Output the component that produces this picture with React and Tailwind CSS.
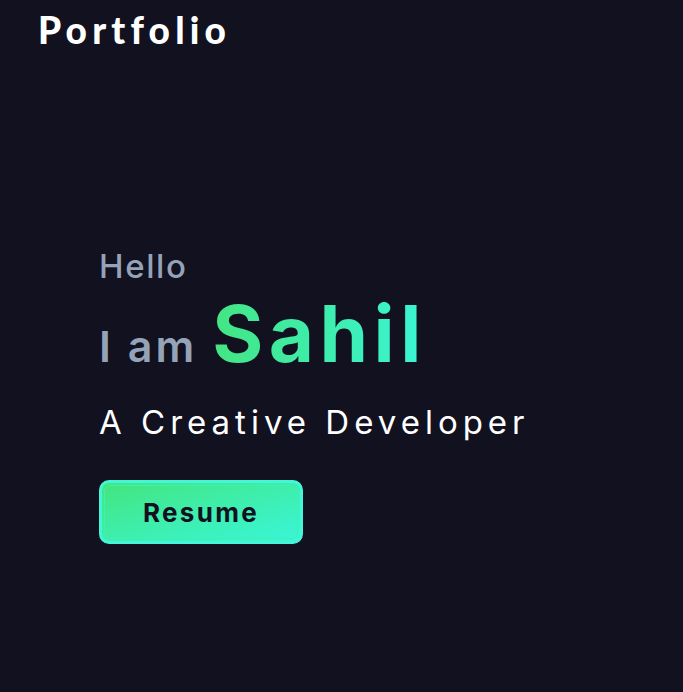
import React from "react";

const App = () => {
  return (
    <div className="min-h-screen w-full bg-[#12111f] font-['Inter',sans-serif] overflow-hidden">
      {/* Navbar */}
      <nav className="px-[38px] pt-[2px]">
        <h1 className="text-[37px] font-black text-white font-['Lato',sans-serif] tracking-[5.2px]">Portfolio</h1>
      </nav>

      {/* Hero */}
      <section className="pl-[99px] pt-[192px]">
        <p className="text-[33px] font-medium text-[#94a3b8] leading-none tracking-[1.6px]">Hello</p>
        <div className="flex items-baseline gap-[15px] mt-[-8px]">
          <span className="text-[43px] font-semibold text-[#94a3b8] tracking-[3px]">I am</span>
          <span className="text-[78px] font-bold tracking-[5.5px] bg-gradient-to-r from-[#44e582] to-[#3af5d4] bg-clip-text text-transparent">
            Sahil
          </span>
        </div>
        <h2 className="mt-[6px] text-[33px] text-white tracking-[5px] font-normal">A Creative Developer</h2>

        <button className="mt-[33px] w-[204px] h-[64px] rounded-[10px] border-[3px] border-[#45f5d8] p-[2px] bg-gradient-to-br from-[#43e57c] to-[#3af6d8] text-[#12111f] text-[26px] font-bold tracking-[2.3px]">
          <span className="flex h-full w-full items-center justify-center rounded-[7px] border border-[#3ff0b0]">
            Resume
          </span>
        </button>
      </section>
    </div>
  );
};

export default App;
